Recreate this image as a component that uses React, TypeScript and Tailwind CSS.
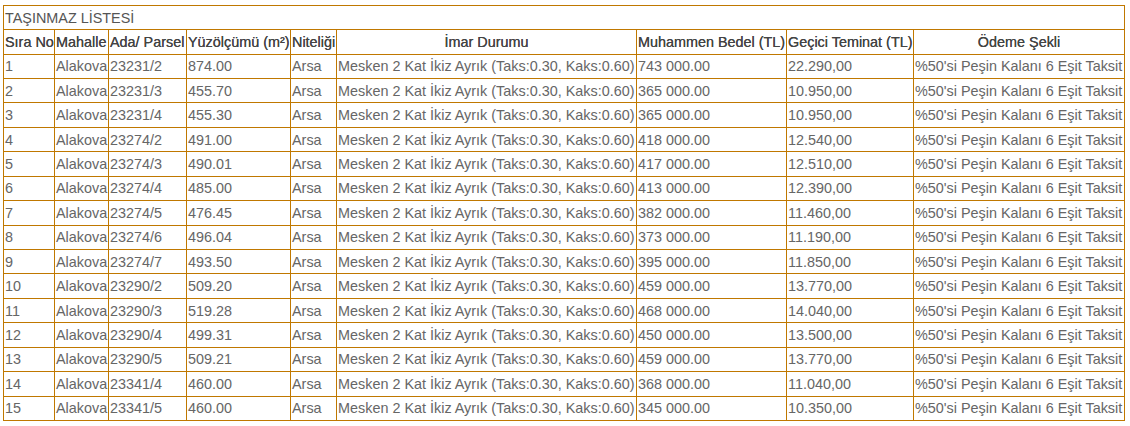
const rows: [string, string, string, string, string][] = [
  ['1', '23231/2', '874.00', '743 000.00', '22.290,00'],
  ['2', '23231/3', '455.70', '365 000.00', '10.950,00'],
  ['3', '23231/4', '455.30', '365 000.00', '10.950,00'],
  ['4', '23274/2', '491.00', '418 000.00', '12.540,00'],
  ['5', '23274/3', '490.01', '417 000.00', '12.510,00'],
  ['6', '23274/4', '485.00', '413 000.00', '12.390,00'],
  ['7', '23274/5', '476.45', '382 000.00', '11.460,00'],
  ['8', '23274/6', '496.04', '373 000.00', '11.190,00'],
  ['9', '23274/7', '493.50', '395 000.00', '11.850,00'],
  ['10', '23290/2', '509.20', '459 000.00', '13.770,00'],
  ['11', '23290/3', '519.28', '468 000.00', '14.040,00'],
  ['12', '23290/4', '499.31', '450 000.00', '13.500,00'],
  ['13', '23290/5', '509.21', '459 000.00', '13.770,00'],
  ['14', '23341/4', '460.00', '368 000.00', '11.040,00'],
  ['15', '23341/5', '460.00', '345 000.00', '10.350,00'],
];

const cell = 'border border-[#c07800] px-px py-0 whitespace-nowrap overflow-hidden';
const head = cell + ' font-normal text-[#444] [text-shadow:0_0_0.4px_#444]';

function App() {
  return (
    <div className="min-h-screen bg-white pl-[3px] pt-[5px] font-['Liberation_Sans',Arial,sans-serif] text-[14.4px] leading-[16px] text-[#666]">
      <table className="table-fixed border-collapse w-[1121px]">
        <colgroup>
          <col className="w-[51px]" />
          <col className="w-[54px]" />
          <col className="w-[78px]" />
          <col className="w-[104px]" />
          <col className="w-[46px]" />
          <col className="w-[300px]" />
          <col className="w-[150px]" />
          <col className="w-[127px]" />
          <col className="w-[211px]" />
        </colgroup>
        <thead>
          <tr className="h-[24px]">
            <td colSpan={9} className={cell + ' text-left text-[#555]'}>
              TAŞINMAZ LİSTESİ
            </td>
          </tr>
          <tr className="h-[24.5px]">
            <th className={head + ' text-left'}>Sıra No</th>
            <th className={head + ' text-left'}>Mahalle</th>
            <th className={head + ' text-left'}>Ada/ Parsel</th>
            <th className={head + ' text-left'}>Yüzölçümü (m²)</th>
            <th className={head + ' text-left'}>Niteliği</th>
            <th className={head + ' text-center'}>İmar Durumu</th>
            <th className={head + ' text-left'}>Muhammen Bedel (TL)</th>
            <th className={head + ' text-left'}>Geçici Teminat (TL)</th>
            <th className={head + ' text-center'}>Ödeme Şekli</th>
          </tr>
        </thead>
        <tbody>
          {rows.map((r) => (
            <tr key={r[0]} className="h-[24.45px]">
              <td className={cell}>{r[0]}</td>
              <td className={cell}>Alakova</td>
              <td className={cell}>{r[1]}</td>
              <td className={cell}>{r[2]}</td>
              <td className={cell}>Arsa</td>
              <td className={cell}>Mesken 2 Kat İkiz Ayrık (Taks:0.30, Kaks:0.60)</td>
              <td className={cell}>{r[3]}</td>
              <td className={cell}>{r[4]}</td>
              <td className={cell}>%50'si Peşin Kalanı 6 Eşit Taksit</td>
            </tr>
          ))}
        </tbody>
      </table>
    </div>
  );
}

export default App;
